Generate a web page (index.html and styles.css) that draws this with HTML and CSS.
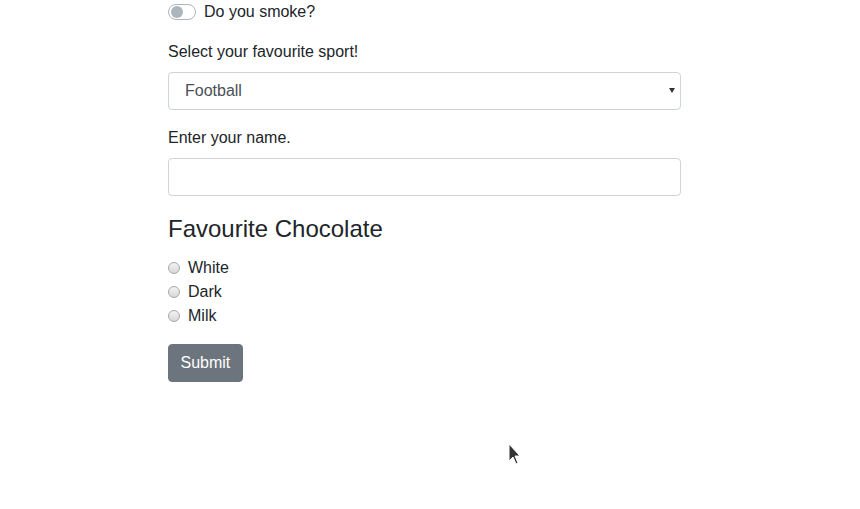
FILE: index.html
```html
<!DOCTYPE html>
<html>
<head>
<meta charset="utf-8">
<link rel="stylesheet" href="styles.css">
</head>
<body>
<form class="container">
  <div class="switch-row">
    <span class="switch"><span class="knob"></span></span>
    <label class="switch-label">Do you smoke?</label>
  </div>
  <div class="group">
    <label class="lbl">Select your favourite sport!</label>
    <div class="select-wrap">
      <select class="control select">
        <option>Football</option>
        <option>Basketball</option>
        <option>Tennis</option>
      </select>
      <svg class="caret" width="6" height="5" viewBox="0 0 6 5"><path d="M0 0H6L3 5Z" fill="#333"/></svg>
    </div>
  </div>
  <div class="group">
    <label class="lbl">Enter your name.</label>
    <input class="control" type="text">
  </div>
  <h4 class="heading">Favourite Chocolate</h4>
  <div class="radios">
    <label class="radio"><span class="dot"></span>White</label>
    <label class="radio"><span class="dot"></span>Dark</label>
    <label class="radio"><span class="dot"></span>Milk</label>
  </div>
  <button type="button" class="btn">Submit</button>
</form>
<svg class="cursor" width="14" height="22" viewBox="0 0 14 22">
  <path d="M1 1 L1 18 L5 14 L8 21 L10 20 L7 13 L12 13 Z" fill="#333" stroke="#fff" stroke-width="1"/>
</svg>
</body>
</html>
```
FILE: styles.css
```css
html, body {
  margin: 0;
  padding: 0;
  background: #fff;
}
body {
  font-family: "Liberation Sans", Arial, sans-serif;
  font-size: 16px;
  line-height: 24px;
  color: #212529;
  position: relative;
  height: 509px;
  overflow: hidden;
}
.container {
  width: 513px;
  margin: 0 0 0 168px;
}
.switch-row {
  display: flex;
  align-items: center;
  height: 24px;
  margin-bottom: 16px;
}
.switch {
  box-sizing: border-box;
  width: 28px;
  height: 16px;
  border: 1px solid #adb5bd;
  border-radius: 8px;
  background: #fff;
  display: flex;
  align-items: center;
  padding-left: 2px;
  margin-right: 8px;
}
.knob {
  width: 12px;
  height: 12px;
  border-radius: 50%;
  background: #adb5bd;
}
.group {
  margin-bottom: 16px;
}
.lbl {
  display: block;
  margin-bottom: 8px;
}
.control {
  display: block;
  box-sizing: border-box;
  width: 100%;
  height: 38px;
  padding: 6px 12px;
  font-family: inherit;
  font-size: 16px;
  line-height: 24px;
  color: #495057;
  background: #fff;
  border: 1px solid #ced4da;
  border-radius: 4px;
  outline: none;
}
.select-wrap {
  position: relative;
}
.select {
  appearance: none;
  -webkit-appearance: none;
  padding-left: 16px;
}
.caret {
  position: absolute;
  right: 6px;
  top: 16px;
}
.heading {
  font-size: 24px;
  font-weight: 500;
  line-height: 28.8px;
  margin: 0 0 12px;
  padding-top: 3px;
}
.radios {
  display: flex;
  flex-direction: column;
  margin-bottom: 16px;
}
.radio {
  display: flex;
  align-items: center;
  height: 24px;
}
.dot {
  box-sizing: border-box;
  width: 12px;
  height: 12px;
  border-radius: 50%;
  border: 1px solid #a8a8a8;
  background: linear-gradient(#f2f2f2, #d8d8d8);
  margin-right: 8px;
}
.btn {
  font-family: inherit;
  font-size: 16px;
  line-height: 24px;
  color: #fff;
  background: #6c757d;
  border: 1px solid #6c757d;
  border-radius: 4px;
  padding: 6px 11.5px;
  display: block;
}
.cursor {
  position: absolute;
  left: 508px;
  top: 443px;
}
```
